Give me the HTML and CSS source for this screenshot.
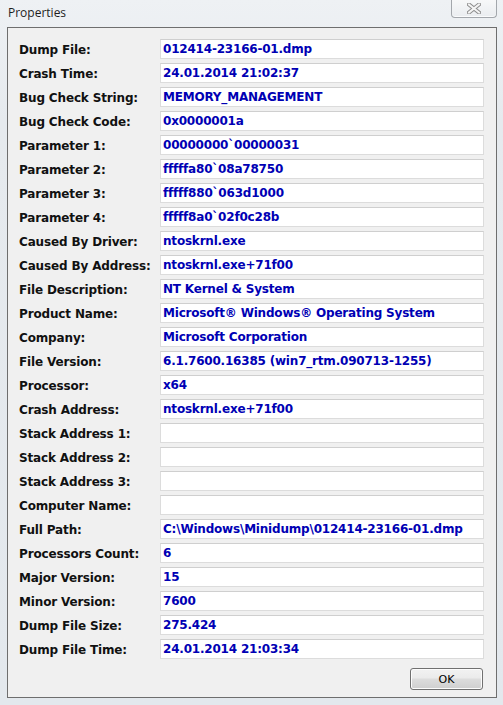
FILE: index.html
```html
<!DOCTYPE html>
<html>
<head>
<meta charset="utf-8">
<link rel="stylesheet" href="styles.css">
</head>
<body>
<div class="window">
  <div class="titlebar">
    <span class="title">Properties</span>
    <div class="close">
      <svg width="14" height="11" viewBox="0 0 14 11">
        <path d="M2 1.5 L12 9.5 M12 1.5 L2 9.5" stroke="#8c8c8c" stroke-width="4" stroke-linecap="square" fill="none"/>
        <path d="M2 1.5 L12 9.5 M12 1.5 L2 9.5" stroke="#f4f4f4" stroke-width="2" stroke-linecap="square" fill="none"/>
      </svg>
    </div>
  </div>
  <div class="client">
    <div class="rows">
      <div class="label">Dump File:</div><div class="value">012414-23166-01.dmp</div>
      <div class="label">Crash Time:</div><div class="value">24.01.2014 21:02:37</div>
      <div class="label">Bug Check String:</div><div class="value">MEMORY_MANAGEMENT</div>
      <div class="label">Bug Check Code:</div><div class="value">0x0000001a</div>
      <div class="label">Parameter 1:</div><div class="value">00000000`00000031</div>
      <div class="label">Parameter 2:</div><div class="value">fffffa80`08a78750</div>
      <div class="label">Parameter 3:</div><div class="value">fffff880`063d1000</div>
      <div class="label">Parameter 4:</div><div class="value">fffff8a0`02f0c28b</div>
      <div class="label">Caused By Driver:</div><div class="value">ntoskrnl.exe</div>
      <div class="label">Caused By Address:</div><div class="value">ntoskrnl.exe+71f00</div>
      <div class="label">File Description:</div><div class="value">NT Kernel &amp; System</div>
      <div class="label">Product Name:</div><div class="value">Microsoft® Windows® Operating System</div>
      <div class="label">Company:</div><div class="value">Microsoft Corporation</div>
      <div class="label">File Version:</div><div class="value">6.1.7600.16385 (win7_rtm.090713-1255)</div>
      <div class="label">Processor:</div><div class="value">x64</div>
      <div class="label">Crash Address:</div><div class="value">ntoskrnl.exe+71f00</div>
      <div class="label">Stack Address 1:</div><div class="value"></div>
      <div class="label">Stack Address 2:</div><div class="value"></div>
      <div class="label">Stack Address 3:</div><div class="value"></div>
      <div class="label">Computer Name:</div><div class="value"></div>
      <div class="label">Full Path:</div><div class="value">C:\Windows\Minidump\012414-23166-01.dmp</div>
      <div class="label">Processors Count:</div><div class="value">6</div>
      <div class="label">Major Version:</div><div class="value">15</div>
      <div class="label">Minor Version:</div><div class="value">7600</div>
      <div class="label">Dump File Size:</div><div class="value">275.424</div>
      <div class="label">Dump File Time:</div><div class="value">24.01.2014 21:03:34</div>
    </div>
    <div class="buttons">
      <button class="ok">OK</button>
    </div>
  </div>
</div>
</body>
</html>
```
FILE: styles.css
```css
html, body {
  margin: 0;
  padding: 0;
}
body {
  width: 503px;
  height: 705px;
  overflow: hidden;
  background: #e6eaee;
}
.window {
  width: 503px;
  height: 705px;
  box-sizing: border-box;
  padding: 0 6px 7px 7px;
  display: flex;
  flex-direction: column;
  background: linear-gradient(to bottom, #eef1f4 0px, #e6eaee 120px, #e3e8ed 100%);
}
.titlebar {
  height: 27px;
  flex: none;
  display: flex;
  justify-content: space-between;
  align-items: flex-start;
}
.title {
  font-family: "Open Sans", "Noto Sans", sans-serif;
  font-size: 12px;
  color: #1e1e1e;
  margin-top: 5px;
  margin-left: 1px;
  line-height: 16px;
}
.close {
  width: 46px;
  height: 18px;
  box-sizing: border-box;
  border: 1px solid #a3a7ac;
  border-top: none;
  border-radius: 0 0 4px 4px;
  background: linear-gradient(to bottom, #f7f8f9, #eaedf0);
  box-shadow: inset 0 -1px 0 #fafbfc;
  display: flex;
  align-items: center;
  justify-content: center;
}
.close svg {
  display: block;
}
.client {
  flex: 1;
  border: 1px solid #6e6e6e;
  background: #f0f0f0;
  box-sizing: border-box;
  padding: 11px 13px 7px 11px;
  display: flex;
  flex-direction: column;
}
.rows {
  display: grid;
  grid-template-columns: 141px 324px;
  grid-auto-rows: 20px;
  row-gap: 4px;
}
.label {
  font-family: "DejaVu Sans", sans-serif;
  font-weight: bold;
  font-size: 12px;
  letter-spacing: -0.15px;
  color: #111;
  line-height: 20px;
  padding-top: 1px;
  box-sizing: border-box;
  white-space: nowrap;
}
.value {
  box-sizing: border-box;
  height: 20px;
  background: #fff;
  border: 1px solid #dcdcdc;
  border-top-color: #cfcfcf;
  font-family: "DejaVu Sans", sans-serif;
  font-weight: bold;
  font-size: 12px;
  letter-spacing: -0.2px;
  color: #0000b4;
  line-height: 17px;
  padding-top: 1px;
  padding-left: 2px;
  white-space: nowrap;
  overflow: hidden;
}
.buttons {
  margin-top: 9px;
  display: flex;
  justify-content: flex-end;
}
.ok {
  width: 73px;
  height: 22px;
  margin: 0;
  padding: 0;
  border: 1px solid #707070;
  border-radius: 3px;
  background: linear-gradient(to bottom, #f2f2f2 0%, #ebebeb 45%, #dddddd 50%, #cfcfcf 100%);
  box-shadow: inset 0 0 0 1px #fcfcfc;
  font-family: "DejaVu Sans", sans-serif;
  font-size: 11px;
  color: #000;
}
```
